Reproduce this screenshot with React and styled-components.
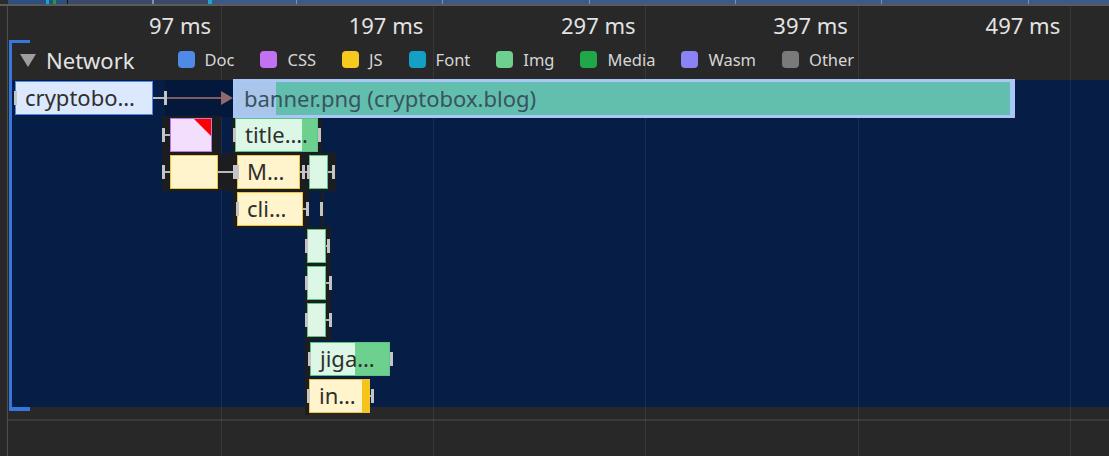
import React from "react"
import styled, { createGlobalStyle } from "styled-components"

const CHART_X = 12
const CHART_Y = 80
const ROW_H = 34
const rows = [81, 118, 155, 192, 229, 266, 303, 342, 379]

const kinds = {
  doc: { fill: "#dbe8fd", border: "#4f8be6", solid: "#4f8be6" },
  css: { fill: "#f3defe", border: "#b77be6", solid: "#b77be6" },
  js: { fill: "#fff4cc", border: "#f0c43a", solid: "#f6c419" },
  img: { fill: "#dcf7e6", border: "#5cc386", solid: "#6dd08e" },
}

const legend = [
  { label: "Doc", color: "#4f8be6" },
  { label: "CSS", color: "#c171f2" },
  { label: "JS", color: "#f7c81e" },
  { label: "Font", color: "#14a0c4" },
  { label: "Img", color: "#6dd08e" },
  { label: "Media", color: "#20a748" },
  { label: "Wasm", color: "#8b82f5" },
  { label: "Other", color: "#7a7a7a" },
]

const ticks = [97, 197, 297, 397, 497]
const gridXs = [221, 433, 645, 858, 1070]

const overview = [
  { w: 8, c: "#2c2c2c" },
  { w: 38, c: "#2d4f7f" },
  { w: 3, c: "#1aa3d4" },
  { w: 4, c: "#2d4f7f" },
  { w: 3, c: "#1e9a4a" },
  { w: 11, c: "#2d4f7f" },
  { w: 1, c: "#111" },
  { w: 84, c: "#3b4866" },
  { w: 2, c: "#8090b0" },
  { w: 54, c: "#3b4866" },
  { w: 4, c: "#1aa3d4" },
  { w: 84, c: "#3c5a88" },
  { w: 1, c: "#7d93b8" },
  { w: 145, c: "#3c5a88" },
  { w: 1, c: "#7d93b8" },
  { w: 146, c: "#3c5a88" },
  { w: 1, c: "#7d93b8" },
  { w: 145, c: "#3c5a88" },
  { w: 1, c: "#7d93b8" },
  { w: 145, c: "#3c5a88" },
  { w: 1, c: "#7d93b8" },
  { w: 146, c: "#3c5a88" },
  { w: 1, c: "#7d93b8" },
  { w: 80, c: "#3c5a88" },
]

// page coordinates, converted to chart coordinates when drawn
const backdrops = [
  { x: 165, y: 80, w: 68, h: 37, c: "#03183b" },
  { x: 162, y: 116, w: 59, h: 38 },
  { x: 232, y: 116, w: 90, h: 38 },
  { x: 162, y: 153, w: 174, h: 38 },
  { x: 233, y: 190, w: 76, h: 38 },
  { x: 321, y: 189, w: 3, h: 40 },
  { x: 305, y: 227, w: 26, h: 113 },
  { x: 305, y: 338, w: 5, h: 77 },
]

const bars = [
  { kind: "doc", x: 15, w: 138, row: 0, text: "cryptobo…" },
  { kind: "css", x: 170, w: 42, row: 1, corner: true },
  { kind: "img", x: 235, w: 83, row: 1, text: "title.…", solidAt: 66 },
  { kind: "js", x: 170, w: 48, row: 2 },
  { kind: "js", x: 237, w: 63, row: 2, text: "M…" },
  { kind: "img", x: 309, w: 19, row: 2 },
  { kind: "js", x: 237, w: 66, row: 3, text: "cli…" },
  { kind: "img", x: 307, w: 19, row: 4 },
  { kind: "img", x: 307, w: 19, row: 5 },
  { kind: "img", x: 307, w: 19, row: 6 },
  { kind: "img", x: 310, w: 80, row: 7, text: "jiga…", solidAt: 44 },
  { kind: "js", x: 309, w: 61, row: 8, text: "in…", solidAt: 52 },
]

// whisker lines: from x1 to x2 on a row, with ticks at given x
const whiskers = [
  { row: 0, x1: 153, x2: 165, ticks: [14, 164] },
  { row: 1, x1: 162, x2: 170, ticks: [162] },
  { row: 1, x1: 317, x2: 320, ticks: [233, 318] },
  { row: 2, x1: 162, x2: 170, ticks: [162] },
  { row: 2, x1: 218, x2: 236, ticks: [233, 236] },
  { row: 2, x1: 300, x2: 309, ticks: [302, 307] },
  { row: 2, x1: 328, x2: 334, ticks: [332] },
  { row: 3, x1: 303, x2: 307, ticks: [236, 306, 320] },
  { row: 4, x1: 326, x2: 328, ticks: [305, 327] },
  { row: 5, x1: 326, x2: 330, ticks: [305, 329] },
  { row: 6, x1: 326, x2: 330, ticks: [305, 329] },
  { row: 7, x1: 390, x2: 391, ticks: [308, 390] },
  { row: 8, x1: 370, x2: 372, ticks: [307, 371] },
]

const GlobalStyle = createGlobalStyle`
  html, body {
    margin: 0;
    padding: 0;
    background: #282828;
  }
  body {
    font-family: "Noto Sans", "Open Sans", sans-serif;
  }
`

const Root = styled.div`
  position: relative;
  width: 1109px;
  height: 456px;
  overflow: hidden;
  background: #282828;
  display: flex;
  flex-direction: column;
`

const Overview = styled.div`
  display: flex;
  height: 4px;
  flex-shrink: 0;
`

const OverviewSeg = styled.div`
  height: 100%;
  flex-shrink: 0;
`

const Divider = styled.div`
  height: 2px;
  flex-shrink: 0;
  background: #5b5b5b;
`

const Body = styled.div`
  flex: 1;
  display: flex;
  padding-left: 7px;
`

const Main = styled.div`
  flex: 1;
  display: flex;
  flex-direction: column;
  border-left: 1px solid #4d4d4d;
`

const Ruler = styled.div`
  display: grid;
  grid-template-columns: 213px repeat(4, 212.3px);
  height: 34px;
`

const TickLabel = styled.div`
  text-align: right;
  padding-right: 10px;
  padding-top: 4px;
  font-size: 22px;
  line-height: 31px;
  color: #e3e3e3;
  white-space: nowrap;
`

const Track = styled.section`
  position: relative;
  margin-left: 1px;
  border-left: 3px solid #3577dc;
  padding-bottom: 4px;

  &::before,
  &::after {
    content: "";
    position: absolute;
    left: -3px;
    width: 21px;
    background: #3577dc;
  }
  &::before {
    top: 0;
    height: 3px;
  }
  &::after {
    bottom: 0;
    height: 4px;
  }
`

const TrackHeader = styled.div`
  display: flex;
  align-items: center;
  height: 40px;
  padding-left: 8px;
`

const Caret = styled.span`
  width: 0;
  height: 0;
  border-left: 8px solid transparent;
  border-right: 8px solid transparent;
  border-top: 13px solid #9e9e9e;
  margin-top: 1px;
`

const TrackTitle = styled.span`
  margin-left: 10px;
  font-size: 22px;
  color: #e3e3e3;
`

const Legend = styled.div`
  display: flex;
  align-items: center;
  gap: 26px;
  margin-left: 43px;
  margin-top: -2px;
`

const LegendItem = styled.div`
  display: flex;
  align-items: center;
  gap: 10px;
  font-size: 16.5px;
  color: #d6d6d6;
`

const Swatch = styled.span`
  width: 17px;
  height: 17px;
  border-radius: 4px;
  background: ${(p) => p.$color};
`

const Chart = styled.div`
  position: relative;
  height: 327px;
  background: #061e46;
`

const Below = styled.div`
  height: 8px;
`

const Separator = styled.div`
  height: 2px;
  background: #3a3a3a;
`

const GridLine = styled.div.attrs((p) => ({ style: { left: p.$x } }))`
  position: absolute;
  top: 6px;
  bottom: 0;
  width: 1px;
  background: rgba(255, 255, 255, 0.075);
  z-index: 1;
`

const Backdrop = styled.div.attrs((p) => ({
  style: { left: p.$x, top: p.$y, width: p.$w, height: p.$h, background: p.$c },
}))`
  position: absolute;
  background: #1c1d20;
  z-index: 2;
`

const Bar = styled.div.attrs((p) => {
  const k = kinds[p.$kind]
  return {
    style: {
      left: p.$x,
      top: p.$y,
      width: p.$w,
      background: p.$solidAt
        ? `linear-gradient(to right, ${k.fill} 0 ${p.$solidAt}px, ${k.solid} ${p.$solidAt}px)`
        : k.fill,
      borderColor: k.border,
    },
  }
})`
  position: absolute;
  z-index: 3;
  box-sizing: border-box;
  height: ${ROW_H}px;
  border: 1.5px solid;
  overflow: hidden;
`

const BarText = styled.span`
  display: block;
  padding-left: 9px;
  font-size: 22px;
  line-height: 30px;
  color: #2f2f2f;
  white-space: nowrap;
`

const Corner = styled.span`
  position: absolute;
  top: 0;
  right: 0;
  width: 0;
  height: 0;
  border-top: 17px solid #ff0000;
  border-left: 17px solid transparent;
`

const Selected = styled.div`
  position: absolute;
  z-index: 3;
  left: ${233 - CHART_X}px;
  top: ${79 - CHART_Y}px;
  width: 782px;
  height: 39px;
  box-sizing: border-box;
  border: 3px solid #a8c6f6;
  border-right-width: 5px;
  background: linear-gradient(to right, #a9c5ea 0 40px, #62bfae 40px);
`

const SelectedText = styled.span`
  display: block;
  padding-left: 8px;
  font-size: 22px;
  line-height: 32px;
  color: #3a5260;
  white-space: nowrap;
`

const Arrow = styled.svg`
  position: absolute;
  z-index: 3;
  left: ${165 - CHART_X}px;
  top: ${91 - CHART_Y}px;
  overflow: visible;
`

const WhiskerLine = styled.div.attrs((p) => ({
  style: { left: p.$x, top: p.$y, width: p.$w },
}))`
  position: absolute;
  z-index: 2;
  height: 2px;
  background: #b9b9b9;
`

const WhiskerTick = styled.div.attrs((p) => ({
  style: { left: p.$x, top: p.$y },
}))`
  position: absolute;
  z-index: 4;
  width: 3px;
  height: 14px;
  background: #c4c4c4;
`

const cx = (x) => x - CHART_X
const cy = (y) => y - CHART_Y

export default function App() {
  return (
    <>
      <GlobalStyle />
      <Root>
        <Overview>
          {overview.map((s, i) => (
            <OverviewSeg key={i} style={{ width: s.w, background: s.c }} />
          ))}
        </Overview>
        <Divider />
        <Body>
          <Main>
            <Ruler>
              {ticks.map((t) => (
                <TickLabel key={t}>{t} ms</TickLabel>
              ))}
            </Ruler>
            <Track>
              <TrackHeader>
                <Caret />
                <TrackTitle>Network</TrackTitle>
                <Legend>
                  {legend.map((l) => (
                    <LegendItem key={l.label}>
                      <Swatch $color={l.color} />
                      {l.label}
                    </LegendItem>
                  ))}
                </Legend>
              </TrackHeader>
              <Chart>
                {backdrops.map((b, i) => (
                  <Backdrop key={i} $x={cx(b.x)} $y={cy(b.y)} $w={b.w} $h={b.h} $c={b.c} />
                ))}
                {whiskers.map((w, i) => (
                  <React.Fragment key={i}>
                    <WhiskerLine $x={cx(w.x1)} $y={cy(rows[w.row]) + 16} $w={w.x2 - w.x1} />
                    {w.ticks.map((t) => (
                      <WhiskerTick key={t} $x={cx(t)} $y={cy(rows[w.row]) + 10} />
                    ))}
                  </React.Fragment>
                ))}
                <Arrow width="68" height="14">
                  <line x1="0" y1="7" x2="58" y2="7" stroke="#7e5d62" strokeWidth="2" />
                  <path d="M56 0 L68 7 L56 14 Z" fill="#8d6a6c" />
                </Arrow>
                <Selected>
                  <SelectedText>banner.png (cryptobox.blog)</SelectedText>
                </Selected>
                {bars.map((b, i) => (
                  <Bar
                    key={i}
                    $kind={b.kind}
                    $x={cx(b.x)}
                    $y={cy(rows[b.row])}
                    $w={b.w}
                    $solidAt={b.solidAt}
                  >
                    {b.text && <BarText>{b.text}</BarText>}
                    {b.corner && <Corner />}
                  </Bar>
                ))}
              </Chart>
            </Track>
            <Below />
            <Separator />
          </Main>
        </Body>
        {gridXs.map((x) => (
          <GridLine key={x} $x={x} />
        ))}
      </Root>
    </>
  )
}
